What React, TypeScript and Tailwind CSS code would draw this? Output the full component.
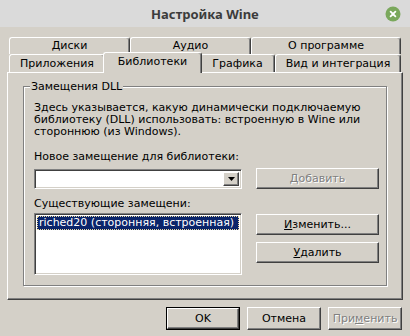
import React from "react";

const raised =
  "border border-[#404040] border-t-white border-l-white shadow-[inset_-1px_-1px_0_#808080]";
const sunken =
  "border border-[#808080] border-r-white border-b-white shadow-[inset_1px_1px_0_#404040,inset_-1px_-1px_0_#d4d0c8]";
const disabled = "text-[#808080] [text-shadow:1px_1px_0_#ffffff]";

function Tab({ w, label }: { w: string; label: string }) {
  return (
    <div
      className={`${w} h-full flex items-center justify-center rounded-t-[3px] border-t border-l border-r border-t-white border-l-white border-r-[#404040] shadow-[inset_-1px_0_0_#808080] bg-[#d4d0c8]`}
    >
      {label}
    </div>
  );
}

export default function App() {
  return (
    <div className="w-[410px] h-[336px] bg-[#d4d0c8] flex flex-col font-['DejaVu_Sans',sans-serif] text-[11px] leading-[12px] text-black overflow-hidden">
      {/* Title bar */}
      <div className="h-[27px] shrink-0 bg-[#dadada] grid grid-cols-[40px_1fr_40px] items-center">
        <div />
        <div className="text-center font-['Noto_Sans',sans-serif] font-bold text-[13px] leading-[16px] text-[#3c3c3c]">
          Настройка Wine
        </div>
        <div className="flex justify-end pr-[9px]">
          <svg width="16" height="16" viewBox="0 0 16 16">
            <circle cx="8" cy="8" r="7.5" fill="#7aa85c" />
            <path
              d="M5.6 5.6l4.8 4.8M10.4 5.6l-4.8 4.8"
              stroke="#ffffff"
              strokeWidth="1.8"
              strokeLinecap="round"
            />
          </svg>
        </div>
      </div>

      <div className="px-[7px] mt-[10px] flex flex-col">
        {/* Tabs row 1 */}
        <div className="flex h-[17px] px-[2px]">
          <Tab w="w-[121px]" label="Диски" />
          <Tab w="w-[121px]" label="Аудио" />
          <Tab w="w-[150px]" label="О программе" />
        </div>
        {/* Tabs row 2 */}
        <div className="flex h-[18px] px-[2px]">
          <Tab w="w-[96px]" label="Приложения" />
          <div className="relative z-10 w-[99px] shrink-0 h-[21px] -mt-[2px] -mx-[2px] flex items-center justify-center rounded-t-[3px] border-t border-l border-r border-t-white border-l-white border-r-[#404040] shadow-[inset_-1px_0_0_#808080] bg-[#d4d0c8] pb-[2px]">
            Библиотеки
          </div>
          <Tab w="w-[75px]" label="Графика" />
          <Tab w="w-[126px]" label="Вид и интеграция" />
        </div>

        {/* Panel */}
        <div className={`h-[228px] ${raised} flex flex-col`}>
          <div className="relative mt-[13px] mx-[15px] border border-[#808080] shadow-[inset_1px_1px_0_#ffffff,1px_1px_0_#ffffff] pt-[15px] pl-[10px] pb-[10px]">
            <div className="absolute -top-[7px] left-[6px] bg-[#d4d0c8] px-[1px] leading-[13px]">
              Замещения DLL
            </div>
            <p>
              Здесь указывается, какую динамически подключаемую
              <br />
              библиотеку (DLL) использовать: встроенную в Wine или
              <br />
              стороннюю (из Windows).
            </p>
            <div className="mt-[13px]">Новое замещение для библиотеки:</div>
            <div className="mt-[5px] flex items-center">
              <div className={`w-[208px] h-[20px] bg-white ${sunken} flex justify-end p-[2px]`}>
                <div className={`w-[16px] h-full bg-[#d4d0c8] ${raised} flex items-center justify-center`}>
                  <svg width="7" height="4" viewBox="0 0 7 4">
                    <path d="M0 0h7L3.5 4z" fill="#000000" />
                  </svg>
                </div>
              </div>
              <div className={`ml-[14px] w-[123px] h-[21px] bg-[#d4d0c8] ${raised} flex items-center justify-center`}>
                <span className={disabled}>
                  <span className="underline">Д</span>обавить
                </span>
              </div>
            </div>
            <div className="mt-[9px] flex">
              <div className="w-[208px] flex flex-col">
                <div>Существующие замещени:</div>
                <div className={`mt-[3px] h-[62px] bg-white ${sunken} p-[2px]`}>
                  <div className="h-[14px] bg-[#0a246a] text-white border border-dotted border-[#e8d8a0] flex items-center pl-[1px] whitespace-nowrap overflow-hidden">
                    riched20 (сторонняя, встроенная)
                  </div>
                </div>
              </div>
              <div className="ml-[14px] pt-[16px] flex flex-col gap-[7px]">
                <div className={`w-[123px] h-[21px] bg-[#d4d0c8] ${raised} flex items-center justify-center`}>
                  <span>
                    <span className="underline">И</span>зменить...
                  </span>
                </div>
                <div className={`w-[123px] h-[21px] bg-[#d4d0c8] ${raised} flex items-center justify-center`}>
                  <span>
                    <span className="underline">У</span>далить
                  </span>
                </div>
              </div>
            </div>
          </div>
        </div>

        {/* Bottom buttons */}
        <div className="mt-[7px] flex justify-end gap-[7px] pr-[1px]">
          <div className="w-[74px] h-[23px] border border-black">
            <div className={`w-full h-full bg-[#d4d0c8] ${raised} flex items-center justify-center`}>
              OK
            </div>
          </div>
          <div className={`w-[74px] h-[23px] bg-[#d4d0c8] ${raised} flex items-center justify-center`}>
            Отмена
          </div>
          <div className={`w-[74px] h-[23px] bg-[#d4d0c8] ${raised} flex items-center justify-center`}>
            <span className={disabled}>
              При<span className="underline">м</span>енить
            </span>
          </div>
        </div>
      </div>
    </div>
  );
}
